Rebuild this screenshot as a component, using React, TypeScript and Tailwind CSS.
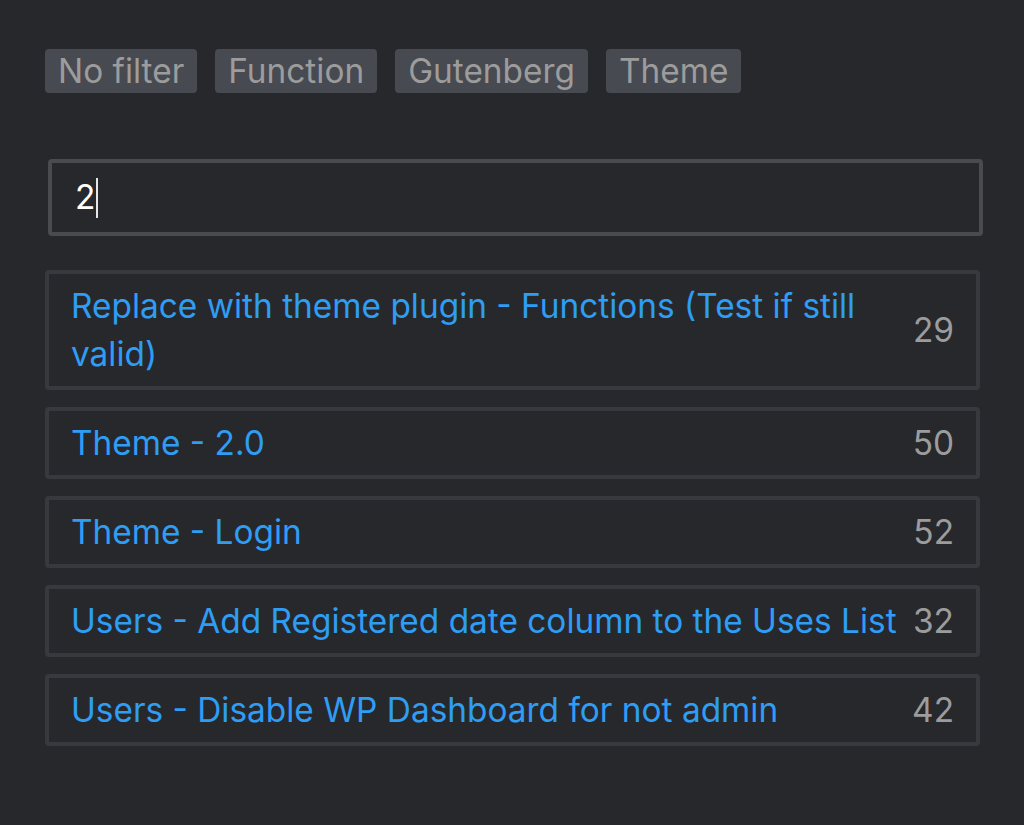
import React from 'react';

interface Snippet {
  id: number;
  title: string;
  count: number;
}

const filters = ['No filter', 'Function', 'Gutenberg', 'Theme'];

const snippets: Snippet[] = [
  { id: 1, title: 'Replace with theme plugin - Functions (Test if still valid)', count: 29 },
  { id: 2, title: 'Theme - 2.0', count: 50 },
  { id: 3, title: 'Theme - Login', count: 52 },
  { id: 4, title: 'Users - Add Registered date column to the Uses List', count: 32 },
  { id: 5, title: 'Users - Disable WP Dashboard for not admin', count: 42 },
];

export default function App() {
  const query = '2';

  return (
    <div
      className="w-[1024px] h-[825px] bg-[#27282c] pl-[45px] pr-[41px] pt-[49px]"
      style={{ fontFamily: 'Inter, "Noto Sans", sans-serif' }}
    >
      <div className="flex gap-[18px]">
        {filters.map((f) => (
          <button
            key={f}
            className="h-[44px] px-[13px] rounded-[4px] bg-[#474a50] text-[#9c9c9c] text-[33.4px] leading-[44px]"
          >
            {f}
          </button>
        ))}
      </div>

      {/* search box */}
      <div className="mt-[66px] pl-[3px]">
        <div className="h-[77px] border-4 border-[#4b4b4d] rounded-[4px] px-[23px] flex items-center text-[33.4px] text-white">
          <span>{query}</span>
          <span className="ml-[1px] w-[1.5px] h-[40px] bg-[#e6e6e6]" />
        </div>
      </div>

      <div className="mt-[34px] pr-[3px] flex flex-col gap-[17px]">
        {snippets.map((s) => (
          <div
            key={s.id}
            className="flex items-center border-4 border-[#38393f] rounded-[4px] pl-[22px] pr-[22px] py-[8px]"
          >
            <span className="flex-1 text-[#2e9df3] text-[33.4px] leading-[48px]">{s.title}</span>
            <span className="ml-[16px] text-[#9c9c9c] text-[33.4px] leading-[48px]">{s.count}</span>
          </div>
        ))}
      </div>
    </div>
  );
}
